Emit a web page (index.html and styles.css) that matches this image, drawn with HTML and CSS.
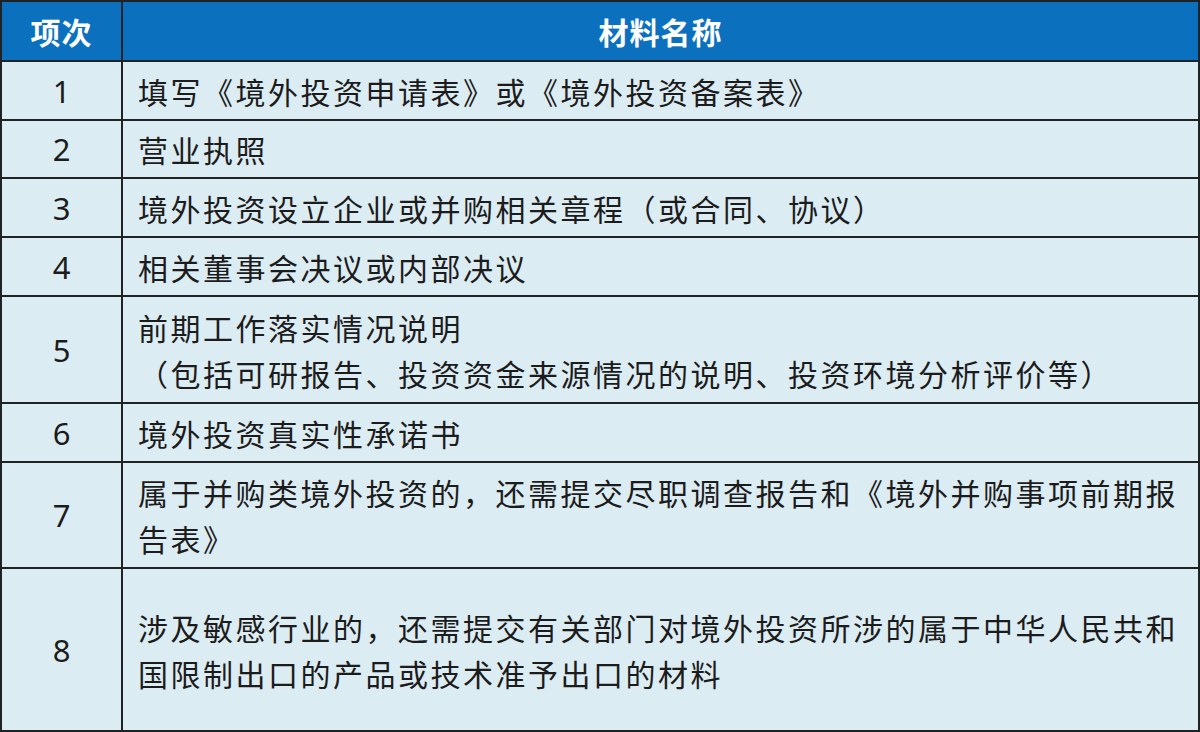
FILE: index.html
```html
<!DOCTYPE html>
<html lang="zh-CN">
<head>
<meta charset="utf-8">
<title>材料名称</title>
<link rel="stylesheet" href="styles.css">
</head>
<body>
<table class="materials">
  <colgroup>
    <col class="col-no">
    <col class="col-name">
  </colgroup>
  <thead>
    <tr class="row-head">
      <th>项次</th>
      <th>材料名称</th>
    </tr>
  </thead>
  <tbody>
    <tr class="row-a">
      <td class="no">1</td>
      <td class="name">填写《境外投资申请表》或《境外投资备案表》</td>
    </tr>
    <tr class="row-b">
      <td class="no">2</td>
      <td class="name">营业执照</td>
    </tr>
    <tr class="row-a">
      <td class="no">3</td>
      <td class="name">境外投资设立企业或并购相关章程（或合同、协议）</td>
    </tr>
    <tr class="row-a">
      <td class="no">4</td>
      <td class="name">相关董事会决议或内部决议</td>
    </tr>
    <tr class="row-c">
      <td class="no">5</td>
      <td class="name">前期工作落实情况说明<br>（包括可研报告、投资资金来源情况的说明、投资环境分析评价等）</td>
    </tr>
    <tr class="row-a">
      <td class="no">6</td>
      <td class="name">境外投资真实性承诺书</td>
    </tr>
    <tr class="row-d">
      <td class="no">7</td>
      <td class="name">属于并购类境外投资的，还需提交尽职调查报告和《境外并购事项前期报告表》</td>
    </tr>
    <tr class="row-e">
      <td class="no">8</td>
      <td class="name">涉及敏感行业的，还需提交有关部门对境外投资所涉的属于中华人民共和国限制出口的产品或技术准予出口的材料</td>
    </tr>
  </tbody>
</table>
</body>
</html>
```

FILE: styles.css
```css
html, body {
  margin: 0;
  padding: 0;
  background: #dcecf3;
}

.materials {
  width: 1200px;
  border-collapse: collapse;
  table-layout: fixed;
  font-family: "Noto Sans CJK SC", "Noto Sans", sans-serif;
  color: #1c1c1c;
  background: #dcecf3;
}

.col-no {
  width: 121px;
}

.materials th,
.materials td {
  border: 2px solid #1f2326;
  padding: 0;
  font-size: 30px;
  line-height: 46px;
  vertical-align: middle;
}

.materials th {
  background: #0b71bf;
  color: #ffffff;
  font-weight: 700;
  letter-spacing: 1px;
  text-align: center;
}

.materials td.no {
  text-align: center;
  font-family: "Noto Sans", "Open Sans", sans-serif;
  font-weight: 400;
  font-size: 31px;
}

.materials td.name {
  text-align: left;
  padding: 0 12px 0 15px;
  letter-spacing: 2.5px;
  font-weight: 400;
}

.row-head { height: 60px; }
.row-a { height: 59px; }
.row-b { height: 58px; }
.row-c { height: 107px; }
.row-d { height: 106px; }
.row-e { height: 163px; }
```
